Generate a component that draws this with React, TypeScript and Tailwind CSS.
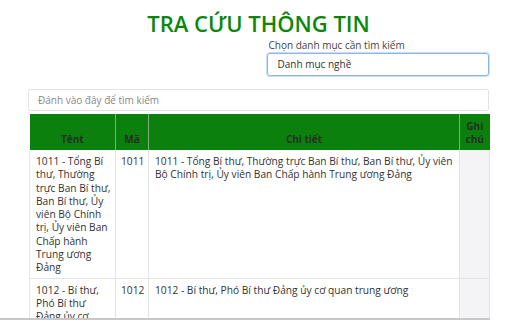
import React from 'react';

const ROWS = [
  {
    name: '1011 - Tổng Bí thư, Thường trực Ban Bí thư, Ban Bí thư, Ủy viên Bộ Chính trị, Ủy viên Ban Chấp hành Trung ương Đảng',
    code: '1011',
    detail: '1011 - Tổng Bí thư, Thường trực Ban Bí thư, Ban Bí thư, Ủy viên Bộ Chính trị, Ủy viên Ban Chấp hành Trung ương Đảng',
  },
  {
    name: '1012 - Bí thư, Phó Bí thư Đảng ủy cơ quan trung ương',
    code: '1012',
    detail: '1012 - Bí thư, Phó Bí thư Đảng ủy cơ quan trung ương',
  },
];

export default function App() {
  return (
    <div className="relative h-[320px] w-[512px] overflow-hidden bg-white font-['Open_Sans',sans-serif] text-[#333]">
      <div className="px-[28px] pr-[23px]">
        {/* Title */}
        <h1 className="pt-[8px] text-center text-[22px] leading-[30px] font-semibold text-[#0c870c]">
          TRA CỨU THÔNG TIN
        </h1>

        {/* Category select */}
        <div className="grid grid-cols-2">
          <div />
          <div className="pl-[8px] pt-[1px]">
            <label className="block pl-[2px] text-[10px] leading-[13px] text-[#444]">Chọn danh mục cần tìm kiếm</label>
            <div className="mt-[1px] h-[23px] rounded-[3px] border border-[#8fb4e8] pl-[10px] text-[10px] leading-[21px] text-[#333] shadow-[0_0_0_1px_#c9dcf6]">
              Danh mục nghề
            </div>
          </div>
        </div>

        {/* Search */}
        <div className="mt-[13px] h-[22px] rounded-[2px] border border-[#e2e2e2] pl-[9px] text-[10px] leading-[20px] text-[#888]">
          Đánh vào đây để tìm kiếm
        </div>

        {/* Table */}
        <table className="mt-[3px] ml-[1px] w-[460px] table-fixed border-collapse text-[10.2px] leading-[13.3px]">
          <colgroup>
            <col className="w-[86px]" />
            <col className="w-[33px]" />
            <col className="w-[311px]" />
            <col className="w-[30px]" />
          </colgroup>
          <thead>
            <tr className="h-[36px] bg-[#0c800c] text-[10px] font-bold text-[#233023]">
              <th className="border-r border-[#7fb07f] px-[4px] pb-[4px] align-bottom text-center">Tênt</th>
              <th className="border-r border-[#7fb07f] px-[4px] pb-[4px] align-bottom text-center">Mã</th>
              <th className="border-r border-[#7fb07f] px-[4px] pb-[4px] align-bottom text-center">Chi tiết</th>
              <th className="px-[1px] pb-[4px] align-bottom text-center leading-[13px]">Ghi chú</th>
            </tr>
          </thead>
          <tbody>
            {ROWS.map((row) => (
              <tr key={row.code} className="border-b border-[#e4e4e4]">
                <td className="border-l border-r border-[#e4e4e4] pl-[6px] pr-[3px] pt-[5px] pb-[3px] align-top">{row.name}</td>
                <td className="border-r border-[#e4e4e4] px-[5px] pt-[5px] align-top">{row.code}</td>
                <td className="border-r border-[#e4e4e4] px-[6px] pt-[5px] align-top">{row.detail}</td>
                <td className="border-r border-[#e4e4e4] bg-[#f4f4f6]" />
              </tr>
            ))}
          </tbody>
        </table>
      </div>

      {/* bottom scrollbar strip */}
      <div className="absolute bottom-0 left-0 h-[2px] w-[490px] bg-[#c8c8c8]" />
    </div>
  );
}
